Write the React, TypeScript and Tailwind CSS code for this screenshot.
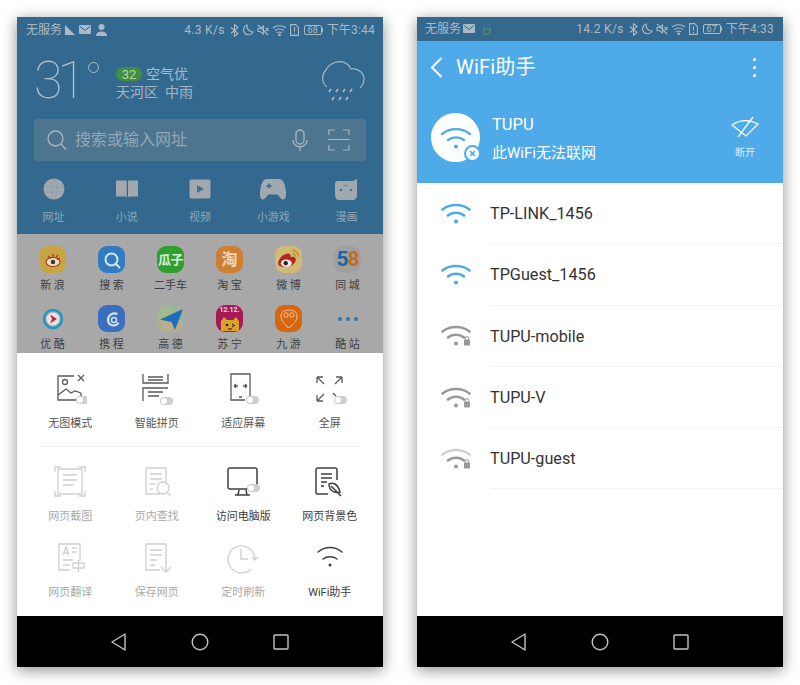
const FONT = "font-['Roboto','Noto_Sans_CJK_SC',sans-serif]";

function Toggle({ x, y }: { x: number; y: number }) {
  return (
    <g stroke="none">
      <rect x={x} y={y} width="13" height="8" rx="4" fill="#cfcfcf" />
      <circle cx={x + 4} cy={y + 4} r="3" fill="#fff" />
    </g>
  );
}

function Wifi({ color, top, locked }: { color: string; top?: string; locked?: boolean }) {
  return (
    <svg width="30" height="22" viewBox="0 0 30 22" fill="none" strokeWidth="2.600" strokeLinecap="round">
      <path d="M1.500 7.500C9 1.500 21 1.500 28.500 7.500" stroke={top ?? color} />
      <path d="M7 13.500C11.500 9.800 18.500 9.800 23 13.500" stroke={color} />
      <circle cx="15" cy="19.500" r="2" fill={color} />
      {locked && (
        <g>
          <rect x="23" y="15.500" width="6" height="6" rx="0.800" fill={color} />
          <path d="M24.300 15.500v-1.200a1.700 1.700 0 0 1 3.400 0v1.200" stroke={color} strokeWidth="1" />
        </g>
      )}
    </svg>
  );
}

function StatusRight({ battery, time, speed }: { battery: string; time: string; speed: string }) {
  return (
    <div className="flex items-center gap-[3px] text-[12px] text-[#a9bac6]">
      <span className="mr-[2px] tracking-[0.3px]">{speed}</span>
      <svg width="9" height="13" viewBox="0 0 9 13" fill="none" stroke="#a9bac6" strokeWidth="1.100">
        <path d="M1 3.500l7 6-3.500 3V.5l3.500 3-7 6" />
      </svg>
      <svg width="12" height="12" viewBox="0 0 12 12" fill="none" stroke="#a9bac6" strokeWidth="1.200">
        <path d="M5 1a5 5 0 1 0 6 7A6 6 0 0 1 5 1z" />
      </svg>
      <svg width="12" height="12" viewBox="0 0 12 12" fill="none" stroke="#a9bac6" strokeWidth="1.100">
        <path d="M1 4.500h2L6.500 2v8L3 7.500H1zM1 1l10 10M8.500 4l3 3M11.500 4l-3 3" />
      </svg>
      <svg width="15" height="12" viewBox="0 0 15 12" fill="none" stroke="#a9bac6" strokeWidth="1.100">
        <path d="M1 4c3.500-3 9.500-3 13 0M3 6.500c2.500-2 6.500-2 9 0M5 8.800c1.500-1 3.500-1 5 0" />
        <circle cx="7.500" cy="10.800" r="0.800" fill="#a9bac6" />
      </svg>
      <svg width="9" height="12" viewBox="0 0 9 12" fill="none" stroke="#a9bac6" strokeWidth="1.100">
        <path d="M.6.6h5l2.800 2.800v8H.6zM4.500 3v4.500M4.500 9v1" />
      </svg>
      <div className="ml-[2px] flex items-center">
        <div className="flex h-[10px] w-[18px] items-center justify-center rounded-[2px] border border-[#a9bac6] text-[9px] leading-none">
          {battery}
        </div>
        <div className="h-[4px] w-[1px] bg-[#a9bac6]" />
      </div>
      <span className="ml-[1px] tracking-[0.2px]">{time}</span>
    </div>
  );
}

function NavBar() {
  return (
    <div className="flex h-[51px] items-center justify-center gap-[61px] bg-black">
      <svg width="20" height="20" viewBox="0 0 20 20" fill="none" stroke="#c4c4c4" strokeWidth="1.400" strokeLinejoin="round">
        <path d="M16 2v16L3 10z" />
      </svg>
      <svg width="20" height="20" viewBox="0 0 20 20" fill="none" stroke="#c4c4c4" strokeWidth="1.400">
        <circle cx="10" cy="10" r="7.800" />
      </svg>
      <svg width="20" height="20" viewBox="0 0 20 20" fill="none" stroke="#c4c4c4" strokeWidth="1.400">
        <rect x="3" y="3" width="14" height="14" rx="1" />
      </svg>
    </div>
  );
}

const TABS: { label: string; icon: React.ReactNode }[] = [
  {
    label: "网址",
    icon: (
      <svg width="22" height="22" viewBox="0 0 22 22">
        <circle cx="11" cy="11" r="10.500" fill="#a2a9ae" />
        <path d="M1 9h20M1 14h20M11 1c-4 6-4 14 0 20M11 1c4 6 4 14 0 20" stroke="#8d9ba6" strokeWidth="0.800" fill="none" />
      </svg>
    ),
  },
  {
    label: "小说",
    icon: (
      <svg width="22" height="20" viewBox="0 0 22 20" fill="#a2a9ae">
        <path d="M0 1.500h9.500c.8 0 1.200.5 1.200 1.200V19c-.4-.8-1-1.500-2-1.500H0zM12 2.700c0-.7.500-1.200 1.200-1.200H22v16h-8.500c-.8 0-1.200.6-1.500 1.500z" />
      </svg>
    ),
  },
  {
    label: "视频",
    icon: (
      <svg width="22" height="20" viewBox="0 0 22 20">
        <rect x="0.500" y="0.500" width="21" height="19" rx="1.500" fill="#a2a9ae" />
        <path d="M8 6l7 4-7 4z" fill="#44718f" />
      </svg>
    ),
  },
  {
    label: "小游戏",
    icon: (
      <svg width="26" height="21" viewBox="0 0 26 21">
        <path d="M7 0h12c4 0 6 4 7 13 .4 4-.5 7.500-3 7.500-2.500 0-4-4.500-6-5H9c-2 .5-3.500 5-6 5-2.500 0-3.400-3.500-3-7.500C1 4 3 0 7 0z" fill="#a2a9ae" />
        <path d="M9 4.500v5M6.500 7h5" stroke="#44718f" strokeWidth="1.800" />
      </svg>
    ),
  },
  {
    label: "漫画",
    icon: (
      <svg width="22" height="21" viewBox="0 0 22 21">
        <path d="M3 2h15l4-2v16c0 3-2 5-4 5H4c-2 0-4-2-4-5V5c0-2 1-3 3-3z" fill="#a2a9ae" />
        <circle cx="6" cy="11" r="1.300" fill="#44718f" />
        <circle cx="16" cy="11" r="1.300" fill="#44718f" />
        <path d="M8.500 6l1 1 1.500-1 1.500 1 1-1" stroke="#44718f" strokeWidth="0.700" fill="none" />
      </svg>
    ),
  },
];

function Tile({ className, children }: { className: string; children?: React.ReactNode }) {
  return (
    <div className={`flex h-[27px] w-[27px] items-center justify-center overflow-hidden rounded-[9px] ${className}`}>
      {children}
    </div>
  );
}

const SITES: { label: string; icon: React.ReactNode }[] = [
  {
    label: "新 浪",
    icon: (
      <Tile className="bg-[#c9a443]">
        <svg width="20" height="20" viewBox="0 0 20 20" fill="none">
          <ellipse cx="10" cy="12" rx="7" ry="4.500" fill="#f0e0c0" stroke="#a63c22" strokeWidth="1.200" />
          <circle cx="10" cy="12" r="2.200" fill="#333" />
          <path d="M5 6l3 2.500M10 4v4M15 5l-2.500 3M17 8l-3 1.500" stroke="#a63c22" strokeWidth="1.300" />
        </svg>
      </Tile>
    ),
  },
  {
    label: "搜 索",
    icon: (
      <Tile className="bg-[#2f7cc0]">
        <svg width="20" height="20" viewBox="0 0 20 20" fill="none" stroke="#d9e6f0" strokeWidth="2">
          <circle cx="9.500" cy="9.500" r="6" />
          <path d="M14 14l4 4" />
        </svg>
      </Tile>
    ),
  },
  {
    label: "二手车",
    icon: (
      <Tile className="bg-[#2fa02f] text-[13px] font-bold tracking-[-0.5px] text-[#d9ead9]">瓜子</Tile>
    ),
  },
  {
    label: "淘 宝",
    icon: <Tile className="bg-[#cf7f32] text-[16px] font-bold text-[#ecd9c0]">淘</Tile>,
  },
  {
    label: "微 博",
    icon: (
      <Tile className="bg-[#cfbb74]">
        <svg width="26" height="26" viewBox="0 0 24 24" fill="none">
          <path d="M2 15c0-4 5-9 9-9 2.500 0 2.800 2 2.300 3.500 3-1 5 0 5 2 0 4-5 7-10 7-3.500 0-6.300-1-6.300-3.500z" fill="#b9261f" />
          <ellipse cx="9.500" cy="15" rx="5" ry="3.500" fill="#eee" />
          <circle cx="9" cy="15" r="2" fill="#222" />
          <path d="M15 3c3 0 6 3 6 6M15 6c1.500 0 3 1.500 3 3" stroke="#c98a2a" strokeWidth="1.300" />
        </svg>
      </Tile>
    ),
  },
  {
    label: "同 城",
    icon: (
      <Tile className="bg-[#a0a0a0] text-[21px] font-bold tracking-[-1px]">
        <span className="text-[#1e62a8]">5</span>
        <span className="text-[#c86a20]">8</span>
      </Tile>
    ),
  },
  {
    label: "优 酷",
    icon: (
      <Tile className="bg-[#a8a8a8]">
        <svg width="22" height="22" viewBox="0 0 22 22" fill="none">
          <circle cx="11" cy="11" r="9" stroke="#2196c4" strokeWidth="2.600" />
          <circle cx="11" cy="11" r="6.500" fill="#e4e4e4" />
          <path d="M8 6.500l7 4.500-7 4.500 2-4.500z" fill="#c8233e" />
        </svg>
      </Tile>
    ),
  },
  {
    label: "携 程",
    icon: (
      <Tile className="bg-[#3a6fc0]">
        <svg width="20" height="20" viewBox="0 0 20 20" fill="none" stroke="#d3deee" strokeWidth="2.200">
          <path d="M15.500 5C11 3 6 6 6 11c0 4 4 6.500 8 5 1-.5 2-1.500 2.500-2.500" />
          <circle cx="12" cy="11" r="2.500" strokeWidth="1.500" />
        </svg>
      </Tile>
    ),
  },
  {
    label: "高 德",
    icon: (
      <Tile className="bg-[#a3b88f]">
        <svg width="27" height="27" viewBox="0 0 27 27">
          <path d="M0 16L27 3v24H8z" fill="#b8ad8c" />
          <path d="M18 0l9 12v8L11 0z" fill="#94b59f" />
          <path d="M3 14.500L26 4l-8 21-3.500-8z" fill="#1f6fb8" />
        </svg>
      </Tile>
    ),
  },
  {
    label: "苏 宁",
    icon: (
      <Tile className="flex-col justify-start bg-[#a81a55]">
        <span className="mt-[1px] text-[7px] leading-[9px] font-bold text-[#e0e0e0]">12.12.</span>
        <svg width="24" height="16" viewBox="0 0 24 16">
          <path d="M3 16V6l3-4 3 3h6l3-3 3 4v10z" fill="#d9a32a" />
          <circle cx="9" cy="10" r="1.300" fill="#222" />
          <path d="M14 9l2.500 1.500L14 12" stroke="#222" strokeWidth="1" fill="none" />
          <path d="M10 13h4v2h-4z" fill="#c0392b" />
        </svg>
      </Tile>
    ),
  },
  {
    label: "九 游",
    icon: (
      <Tile className="bg-[#d9660f]">
        <svg width="22" height="24" viewBox="0 0 22 24" fill="none" stroke="#e6c9a8" strokeWidth="1">
          <path d="M3 9c0-4 3-6 8-6s8 2 8 6c0 5-3 7-5 9-1 2-3 3-5 2-1-3-6-5-6-11z" />
          <circle cx="8" cy="8" r="2.200" />
          <circle cx="14" cy="8" r="2.200" />
        </svg>
      </Tile>
    ),
  },
  {
    label: "酷 站",
    icon: (
      <div className="flex h-[27px] items-center gap-[4px]">
        <div className="h-[4px] w-[4px] rounded-full bg-[#2a72b5]" />
        <div className="h-[4px] w-[4px] rounded-full bg-[#2a72b5]" />
        <div className="h-[4px] w-[4px] rounded-full bg-[#2a72b5]" />
      </div>
    ),
  },
];

function SheetIcon({ children, stroke }: { children: React.ReactNode; stroke: string }) {
  return (
    <svg width="34" height="32" viewBox="0 0 34 32" fill="none" stroke={stroke} strokeWidth="1.300">
      {children}
    </svg>
  );
}

const DIM = "#cfcfcf";
const ON = "#5a5a5a";
const DARK = "#3f3f3f";

const MODES: { label: string; icon: React.ReactNode }[] = [
  {
    label: "无图模式",
    icon: (
      <SheetIcon stroke={ON}>
        <path d="M21 3H5v24h18M28 20v5" />
        <circle cx="12" cy="9" r="2.500" />
        <path d="M5 22l8-6 5 4 4-2 6 2M25 2l6 6M31 2l-6 6" />
        <Toggle x={23} y={23} />
      </SheetIcon>
    ),
  },
  {
    label: "智能拼页",
    icon: (
      <SheetIcon stroke={ON}>
        <path d="M3 1v9h25V1M8 4h15M8 7h15M3 28V15h25M8 19h15M8 23h11" />
        <Toggle x={20} y={24} />
      </SheetIcon>
    ),
  },
  {
    label: "适应屏幕",
    icon: (
      <SheetIcon stroke={ON}>
        <path d="M19 27H5V1h19v24M8 13h4M8 13l2-2M8 13l2 2M21 13h-4M21 13l-2-2M21 13l-2 2M13 24h3" />
        <Toggle x={20} y={23} />
      </SheetIcon>
    ),
  },
  {
    label: "全屏",
    icon: (
      <SheetIcon stroke={ON}>
        <path d="M4 4l7 7M4 4h6M4 4v6M29 4l-7 7M29 4h-6M29 4v6M4 28l7-7M4 28h6M4 28v-6M20 20l3 3" />
        <Toggle x={21} y={23} />
      </SheetIcon>
    ),
  },
];

const TOOLS: { label: string; color: string; icon: React.ReactNode }[] = [
  {
    label: "网页截图",
    color: "text-[#a9a9a9]",
    icon: (
      <SheetIcon stroke={DIM}>
        <path d="M5 3h24v25H5zM2 6V1h6M32 6V1h-6M2 25v5h6M32 25v5h-6M10 9h14M10 14h14M10 19h10" />
      </SheetIcon>
    ),
  },
  {
    label: "页内查找",
    color: "text-[#a9a9a9]",
    icon: (
      <SheetIcon stroke={DIM}>
        <path d="M20 28H6V2h20v14M10 8h12M10 13h12M10 18h5M10 23h3" />
        <circle cx="23" cy="22" r="6" />
        <path d="M27.500 26.500l3 3" />
      </SheetIcon>
    ),
  },
  {
    label: "访问电脑版",
    color: "text-[#3c3c3c]",
    icon: (
      <SheetIcon stroke={DARK}>
        <rect x="2" y="2" width="29" height="21" rx="2" strokeWidth="1.500" />
        <path d="M9 29h15M13 24l-1 5M20 24l1 5" strokeWidth="1.500" />
        <Toggle x={21} y={18} />
      </SheetIcon>
    ),
  },
  {
    label: "网页背景色",
    color: "text-[#3c3c3c]",
    icon: (
      <SheetIcon stroke={DARK}>
        <path d="M15 28H4a2 2 0 0 1-1-2V4a2 2 0 0 1 2-2h17a2 2 0 0 1 2 2v10M8 8h11M8 12h11M8 16h6M8 20h3" strokeWidth="1.500" />
        <path d="M16 18c4-2 9 0 11 8-6 2-11-2-11-8zM18 20l10 10" strokeWidth="1.500" />
      </SheetIcon>
    ),
  },
  {
    label: "网页翻译",
    color: "text-[#a9a9a9]",
    icon: (
      <SheetIcon stroke={DIM}>
        <path d="M17 28H6V2h21v17M10 13l3-8 3 8M11 11h4M19 6h5M19 10h5M10 18h10M10 23h7M20 21h11v5H20zM25.500 18v12" />
      </SheetIcon>
    ),
  },
  {
    label: "保存网页",
    color: "text-[#a9a9a9]",
    icon: (
      <SheetIcon stroke={DIM}>
        <path d="M20 28H6V2h20v17M10 8h12M10 13h12M10 18h7M10 23h5M26 19v10M21 25l5 5 5-5" />
      </SheetIcon>
    ),
  },
  {
    label: "定时刷新",
    color: "text-[#a9a9a9]",
    icon: (
      <SheetIcon stroke={DIM}>
        <path d="M29 17a13.500 13.500 0 1 0-4 10M15 7v10h7M26 15l3 3 3-3" />
      </SheetIcon>
    ),
  },
  {
    label: "WiFi助手",
    color: "text-[#3c3c3c]",
    icon: (
      <SheetIcon stroke={DARK}>
        <path d="M5 10c7-6 17-6 24 0M10 17c4-3 10-3 14 0" strokeWidth="1.500" strokeLinecap="round" />
        <circle cx="17" cy="23" r="1.500" fill={DARK} stroke="none" />
      </SheetIcon>
    ),
  },
];

function BrowserPhone() {
  return (
    <div className="flex h-[650px] w-[366px] flex-col overflow-hidden bg-white shadow-[0_3px_14px_rgba(0,0,0,0.45)]">
      <div className="h-[217px] bg-[#33698f]">
        <div className="flex h-[26px] items-center justify-between pr-[8px] pl-[9px] text-[12px] text-[#a9bac6]">
          <div className="flex items-center gap-[2px]">
            <span>无服务</span>
            <svg width="12" height="12" viewBox="0 0 12 12" fill="#a9bac6">
              <path d="M1 1l10 10H1z" />
            </svg>
            <svg width="13" height="10" viewBox="0 0 13 10" className="ml-[1px]">
              <rect width="12" height="9" rx="1" fill="#a9bac6" />
              <path d="M1 1.500l5 4 5-4" stroke="#33698f" fill="none" />
            </svg>
            <svg width="13" height="12" viewBox="0 0 13 12" fill="#a9bac6" className="ml-[1px]">
              <circle cx="6.500" cy="3" r="3" />
              <path d="M1 12c0-3 2-4.500 5.500-4.500S12 9 12 12z" />
            </svg>
          </div>
          <StatusRight speed="4.3 K/s" battery="68" time="下午3:44" />
        </div>
        <div className="flex h-[76px] items-center pr-[18px] pl-[17px]">
          <div className="flex w-[82px] shrink-0 items-start text-[52px] leading-none font-thin tracking-[-5px] text-[#a9bfce]">
            31
            <div className="mt-[7px] ml-[7px] h-[11px] w-[11px] shrink-0 rounded-full border border-[#a9bfce]" />
          </div>
          <div className="mt-[4px] text-[14px] leading-[19px] text-[#a9bac6]">
            <div className="flex items-center gap-[4px]">
              <span className="flex h-[14px] w-[26px] items-center justify-center rounded-full bg-[#3f8f3f] text-[13px] text-[#b5d5b5]">
                32
              </span>
              <span>空气优</span>
            </div>
            <div className="mt-[-1px] text-[#a2b5c2]">天河区&nbsp; 中雨</div>
          </div>
          <svg width="44" height="42" viewBox="0 0 44 42" fill="none" stroke="#a9b6c0" strokeWidth="1.200" className="mt-[-1px] ml-auto">
            <path d="M6 27C1 24 0 15 5 10 8 3 19-1 26 4c2 1 3 3 4 5 6-1 13 3 13 10 0 4-2 7-4 9" />
            <path d="M10 29l-2 3M17 29l-2 3M24 29l-2 3M31 29l-2 3M13 37l-2 3M20 37l-2 3M27 37l-2 3" strokeWidth="1.800" />
          </svg>
        </div>
        <div className="mx-[17px] flex h-[42px] items-center rounded-[2px] bg-[#4d7590] pr-[16px] pl-[13px] text-[16px] text-[#93a8b6]">
          <svg width="20" height="20" viewBox="0 0 20 20" fill="none" stroke="#a9b6c0" strokeWidth="1.300">
            <circle cx="8.500" cy="8.500" r="7.500" />
            <path d="M14 14l5 5.500" />
          </svg>
          <span className="ml-[8px]">搜索或输入网址</span>
          <svg width="16" height="23" viewBox="0 0 16 23" fill="none" stroke="#a9b6c0" strokeWidth="1.300" className="ml-auto">
            <rect x="4" y="1" width="8" height="14" rx="4" />
            <path d="M1 11c0 9 14 9 14 0M8 18v4" />
          </svg>
          <svg width="22" height="22" viewBox="0 0 22 22" fill="none" stroke="#a9b6c0" strokeWidth="1.200" className="ml-[20px]">
            <path d="M1 6V1h6M15 1h6v5M1 16v5h6M15 21h6v-5M0 10.500h22" />
          </svg>
        </div>
        <div className="mt-[16px] grid grid-cols-5">
          {TABS.map((tab) => (
            <div key={tab.label} className="flex flex-col items-center">
              <div className="flex h-[24px] items-center">{tab.icon}</div>
              <span className="mt-[9px] text-[11px] leading-[16px] text-[#8fa6b6]">{tab.label}</span>
            </div>
          ))}
        </div>
      </div>
      <div className="grid h-[119px] grid-cols-6 content-start overflow-hidden bg-[#a8a8a8] px-[6px] pt-[12px]">
        {SITES.map((site) => (
          <div key={site.label} className="flex h-[59px] flex-col items-center">
            {site.icon}
            <span className="mt-[5px] text-[11px] leading-[16px] whitespace-pre text-[#3f3f3f]">{site.label}</span>
          </div>
        ))}
      </div>
      <div className="flex h-[263px] flex-col bg-white px-[10px] pt-[20px]">
        <div className="grid grid-cols-4">
          {MODES.map((mode) => (
            <div key={mode.label} className="flex flex-col items-center">
              {mode.icon}
              <span className="mt-[11px] text-[11px] leading-[16px] text-[#555]">{mode.label}</span>
            </div>
          ))}
        </div>
        <div className="mx-[13px] mt-[14px] h-px bg-[#f0f0f0]" />
        <div className="mt-[19px] grid grid-cols-4 gap-y-[17px]">
          {TOOLS.map((tool) => (
            <div key={tool.label} className="flex flex-col items-center">
              {tool.icon}
              <span className={`mt-[11px] text-[11px] leading-[16px] ${tool.color}`}>{tool.label}</span>
            </div>
          ))}
        </div>
      </div>
      <NavBar />
    </div>
  );
}

const NETWORKS: { name: string; color: string; top?: string; locked?: boolean }[] = [
  { name: "TP-LINK_1456", color: "#4eaae8" },
  { name: "TPGuest_1456", color: "#4eaae8" },
  { name: "TUPU-mobile", color: "#999999", locked: true },
  { name: "TUPU-V", color: "#999999", locked: true },
  { name: "TUPU-guest", color: "#999999", top: "#d0d0d0", locked: true },
];

function WifiPhone() {
  return (
    <div className="flex h-[650px] w-[366px] flex-col overflow-hidden bg-white shadow-[0_3px_14px_rgba(0,0,0,0.45)]">
      <div className="flex h-[24px] items-center justify-between bg-[#34688d] pr-[9px] pl-[8px] text-[12px] text-[#a9bac6]">
        <div className="flex items-center gap-[2px]">
          <span>无服务</span>
          <svg width="13" height="10" viewBox="0 0 13 10">
            <rect width="12" height="9" rx="1" fill="#a9bac6" />
            <path d="M1 1.500l5 4 5-4" stroke="#34688d" fill="none" />
          </svg>
          <svg width="10" height="11" viewBox="0 0 10 11" fill="none" className="ml-[4px]">
            <path d="M2 5V3a3 3 0 0 1 6 0v2" stroke="#2a75b5" />
            <rect x="2" y="5" width="6" height="5" stroke="#5a9a4a" />
          </svg>
        </div>
        <StatusRight speed="14.2 K/s" battery="67" time="下午4:33" />
      </div>
      <div className="flex h-[142px] flex-col bg-[#4eaae8] text-white">
        <div className="flex h-[52px] items-center pr-[27px] pl-[13px]">
          <svg width="13" height="21" viewBox="0 0 13 21" fill="none" stroke="#fff" strokeWidth="2">
            <path d="M11.500 1L2 10.500l9.500 9.500" />
          </svg>
          <span className="ml-[13px] text-[20px] leading-none tracking-[0.2px]">WiFi助手</span>
          <div className="ml-auto flex flex-col gap-[5px]">
            <div className="h-[3px] w-[3px] rounded-full bg-white" />
            <div className="h-[3px] w-[3px] rounded-full bg-white" />
            <div className="h-[3px] w-[3px] rounded-full bg-white" />
          </div>
        </div>
        <div className="flex items-start pt-[20px] pr-[24px] pl-[14px]">
          <div className="relative flex h-[49px] w-[49px] items-center justify-center rounded-full bg-white">
            <svg width="32" height="24" viewBox="0 0 32 24" fill="none" stroke="#4eaae8" strokeWidth="2.400" strokeLinecap="round">
              <path d="M2 8c8-6.500 20-6.500 28 0M8 14c4.500-3.500 11.500-3.500 16 0" />
              <circle cx="16" cy="20.500" r="2" fill="#4eaae8" stroke="none" />
            </svg>
            <div className="absolute right-[-1px] bottom-0 flex h-[17px] w-[17px] items-center justify-center rounded-full border-2 border-[#4eaae8] bg-white">
              <svg width="7" height="7" viewBox="0 0 7 7" stroke="#4eaae8" strokeWidth="1.600">
                <path d="M1 1l5 5M6 1l-5 5" />
              </svg>
            </div>
          </div>
          <div className="mt-[1px] ml-[12px]">
            <div className="text-[16.500px] leading-[22px]">TUPU</div>
            <div className="mt-[7px] text-[15px] leading-[20px]">此WiFi无法联网</div>
          </div>
          <div className="mt-[3px] ml-auto flex flex-col items-center">
            <svg width="28" height="22" viewBox="0 0 28 22" fill="none" stroke="#fff" strokeWidth="1.300">
              <path d="M1 9c7-5 16-6 26-1L15 20zM22 1L7 21" />
            </svg>
            <span className="mt-[8px] text-[10px] leading-[14px] text-[#d8ecfa]">断开</span>
          </div>
        </div>
      </div>
      <div className="flex-1">
        {NETWORKS.map((net) => (
          <div key={net.name} className="flex h-[61.300px] items-center pl-[24px]">
            <div className="mb-[2px] shrink-0">
              <Wifi color={net.color} top={net.top} locked={net.locked} />
            </div>
            <div className="ml-[19px] flex h-full flex-1 items-center border-b border-[#f3f3f3] pt-[2px] text-[16.200px] text-[#333]">
              {net.name}
            </div>
          </div>
        ))}
      </div>
      <NavBar />
    </div>
  );
}

export default function App() {
  return (
    <div className={`flex h-[685px] w-[800px] justify-between bg-white px-[17px] pt-[17px] ${FONT}`}>
      <BrowserPhone />
      <WifiPhone />
    </div>
  );
}
